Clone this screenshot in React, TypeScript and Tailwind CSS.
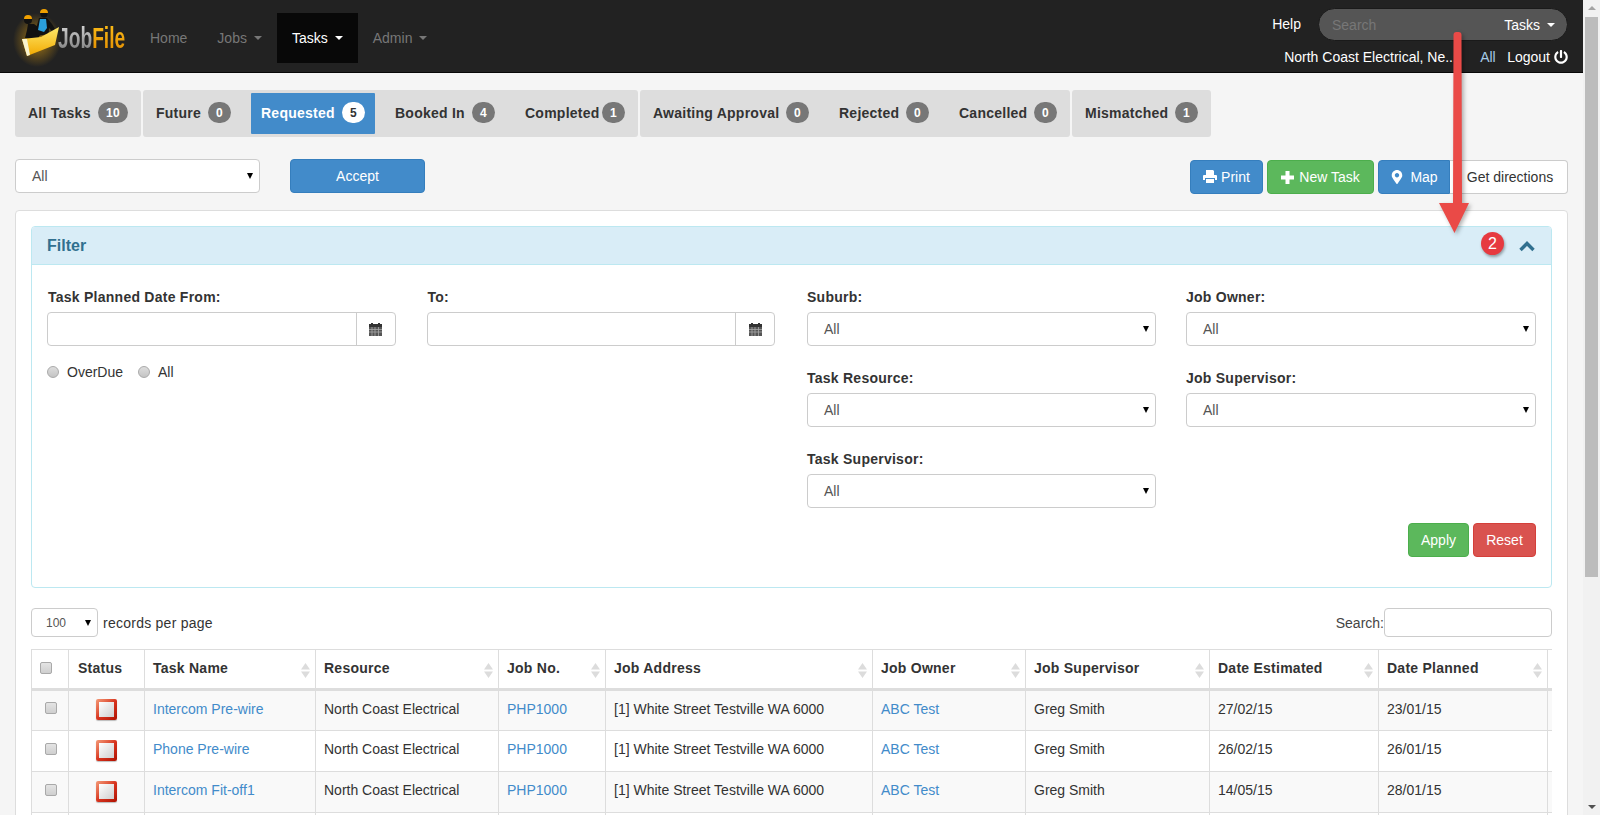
import { FaMapMarkerAlt, FaPowerOff } from 'react-icons/fa'

const Badge = ({ n, active = false }: { n: number; active?: boolean }) => (
  <span
    className={`flex h-[21px] items-center justify-center rounded-full text-xs font-bold ${n > 9 ? 'w-[30px]' : 'w-[23px]'} ${
      active ? 'bg-white text-[#333]' : 'bg-[#777] text-white'
    }`}
  >
    {n}
  </span>
)

const Pill = ({ label, n, w, active = false }: { label: string; n: number; w: string; active?: boolean }) => (
  <a
    className={`flex h-[41px] items-center justify-between rounded-[1px] px-[10px] pb-[2px] text-sm font-bold tracking-[0.25px] ${w} ${
      active ? 'bg-[#428bca] text-white' : 'text-[#333]'
    }`}
  >
    {label}
    <Badge n={n} active={active} />
  </a>
)

const NativeSelect = ({ value, className = '' }: { value: string; className?: string }) => (
  <div className={`relative flex items-center rounded border border-[#ccc] bg-white text-sm text-[#555] ${className}`}>
    <span>{value}</span>
    <span className="absolute right-[6px] top-1/2 -translate-y-1/2 border-x-[3.5px] border-t-[6px] border-x-transparent border-t-black" />
  </div>
)

const Field = ({ label, value }: { label: string; value: string }) => (
  <div>
    <label className="block h-[25px] text-sm leading-[20px] font-bold tracking-[0.25px] text-[#333]">{label}</label>
    <NativeSelect value={value} className="h-[34px] pl-[16px]" />
  </div>
)

const CalendarIcon = () => (
  <svg width="13" height="13" viewBox="0 0 13 13">
    <rect x="2" y="0" width="2" height="2" fill="#333" />
    <rect x="9" y="0" width="2" height="2" fill="#333" />
    <rect x="0" y="1" width="13" height="3" fill="#333" />
    <rect x="0" y="4" width="13" height="9" fill="#555" />
    <path d="M0 6.500h13M0 9h13M3 4v9M6 4v9M9.500 4v9" stroke="#a8a8a8" strokeWidth="0.8" />
  </svg>
)

const DateField = ({ label }: { label: string }) => (
  <div>
    <label className="block h-[25px] pl-[1px] text-sm leading-[20px] font-bold tracking-[0.25px] text-[#333]">{label}</label>
    <div className="flex h-[34px] rounded border border-[#ccc] bg-white">
      <div className="flex-1" />
      <div className="flex w-[39px] items-center justify-center border-l border-[#ccc]">
        <CalendarIcon />
      </div>
    </div>
  </div>
)

const Radio = ({ label }: { label: string }) => (
  <label className="flex items-center gap-[8px] text-sm text-[#333]">
    <span className="h-[12px] w-[12px] rounded-full border border-[#aaa] bg-gradient-to-b from-[#ddd] to-[#c4c4c4]" />
    {label}
  </label>
)

const Check = () => (
  <span className="block h-[12px] w-[12px] rounded-[2px] border border-[#a9a9a9] bg-gradient-to-b from-[#e4e4e4] to-[#cfcfcf]" />
)

const SortIcon = () => (
  <svg className="absolute right-[5px] top-[13px]" width="9" height="15" viewBox="0 0 9 15">
    <path d="M4.500 0 9 6.500H0z M4.500 15 0 8.500h9z" fill="#dcdcdc" />
  </svg>
)

const StatusIcon = () => (
  <span className="mx-auto block h-[21px] w-[21px] rounded-[2px] bg-gradient-to-br from-[#f39a78] via-[#d8341f] to-[#b00f00] p-[3px] shadow-[0_1px_1px_rgba(0,0,0,0.25)]">
    <span className="block h-full w-full bg-gradient-to-br from-white to-[#cfcfcf]" />
  </span>
)

const tabGroups = [
  [{ label: 'All Tasks', n: 10, w: 'w-[120px]' }],
  [
    { label: 'Future', n: 0, w: 'w-[95px]' },
    { label: 'Requested', n: 5, w: 'w-[124px]', active: true },
    { label: 'Booked In', n: 4, w: 'w-[120px]' },
    { label: 'Completed', n: 1, w: 'w-[120px]' },
  ],
  [
    { label: 'Awaiting Approval', n: 0, w: 'w-[176px]' },
    { label: 'Rejected', n: 0, w: 'w-[110px]' },
    { label: 'Cancelled', n: 0, w: 'w-[118px]' },
  ],
  [{ label: 'Mismatched', n: 1, w: 'w-[133px]' }],
]

const columns = [
  { label: 'Task Name', w: 'w-[171px]' },
  { label: 'Resource', w: 'w-[183px]' },
  { label: 'Job No.', w: 'w-[107px]' },
  { label: 'Job Address', w: 'w-[267px]' },
  { label: 'Job Owner', w: 'w-[153px]' },
  { label: 'Job Supervisor', w: 'w-[184px]' },
  { label: 'Date Estimated', w: 'w-[169px]' },
  { label: 'Date Planned', w: 'w-[169px]' },
]

const rows = [
  { task: 'Intercom Pre-wire', est: '27/02/15', planned: '23/01/15' },
  { task: 'Phone Pre-wire', est: '26/02/15', planned: '26/01/15' },
  { task: 'Intercom Fit-off1', est: '14/05/15', planned: '28/01/15' },
]

const Logo = () => (
  <div className="flex h-[65px] items-center">
    <svg width="50" height="65" viewBox="0 0 50 65" className="-ml-[5px] -mr-[2px] shrink-0">
      <defs>
        <radialGradient id="glow" cx="50%" cy="50%" r="50%">
          <stop offset="0%" stopColor="#d89a10" stopOpacity="0.75" />
          <stop offset="100%" stopColor="#d89a10" stopOpacity="0" />
        </radialGradient>
        <linearGradient id="folder" x1="0" y1="0" x2="0" y2="1">
          <stop offset="0%" stopColor="#ffe96a" />
          <stop offset="100%" stopColor="#f2a900" />
        </linearGradient>
      </defs>
      <ellipse cx="27" cy="34" rx="24" ry="27" fill="url(#glow)" />
      <path d="M18 18h6l7 5 7-1 1 4-9 3-3 6-12-3 2-8z" fill="#111" />
      <circle cx="18" cy="14" r="4" fill="#111" />
      <path d="M14 13a4 4 0 0 1 8 0z" fill="#f0a000" />
      <path d="M29 12h8l5 6 3 5-3 2-3-3-1 6-10 2-3-3z" fill="#111" />
      <path d="M30 13h6l1 9-3 4-6-2z" fill="#2a9fdc" />
      <circle cx="34" cy="8" r="3.500" fill="#111" />
      <path d="M30 7a4 4 0 0 1 8 0z" fill="#f0a000" />
      <path d="M12 33 L31 31 L49 21 L45 39 L17 50 Z" fill="url(#folder)" />
      <path d="M12 33 L17 50 L20 49 L17 33z" fill="#f9f4d0" />
    </svg>
    <span className="inline-block origin-left scale-x-[0.64] text-[30px] leading-none font-bold">
      <span className="bg-gradient-to-b from-[#e0e0e0] to-[#777] bg-clip-text text-transparent">Job</span>
      <span className="bg-gradient-to-b from-[#ffc21a] to-[#e08a00] bg-clip-text text-transparent">File</span>
    </span>
  </div>
)

const NavItem = ({ label, caret = true, active = false }: { label: string; caret?: boolean; active?: boolean }) => (
  <a className={`flex h-[50px] items-center gap-[7px] px-[15px] text-sm ${active ? 'bg-[#080808] text-white' : 'text-[#777]'}`}>
    {label}
    {caret && <span className={`border-x-[4px] border-t-[4px] border-x-transparent ${active ? 'border-t-white' : 'border-t-[#777]'}`} />}
  </a>
)

const Btn = ({ className, children }: { className: string; children: React.ReactNode }) => (
  <button className={`flex h-[34px] items-center justify-center rounded border text-sm text-white ${className}`}>{children}</button>
)

export default function App() {
  return (
    <div className="relative flex h-[815px] overflow-hidden bg-[#f5f5f5] font-['Liberation_Sans',Arial,sans-serif] text-sm text-[#333]">
      <div className="min-w-0 flex-1">
        {/* Navbar */}
        <header className="flex h-[73px] justify-between border-b border-[#080808] bg-[#222] px-[15px]">
          <div className="flex items-center pt-[4px]">
            <div className="w-[120px] shrink-0">
              <Logo />
            </div>
            <nav className="flex items-center">
              <NavItem label="Home" caret={false} />
              <NavItem label="Jobs" />
              <NavItem label="Tasks" active />
              <NavItem label="Admin" />
            </nav>
          </div>
          <div className="flex flex-col items-end pt-[8px]">
            <div className="flex items-center gap-[17px]">
              <span className="-mt-[1px] text-white">Help</span>
              <div className="flex h-[33px] w-[250px] items-center justify-between rounded-full border border-[#1a1a1a] bg-[#555] pl-[13px] pr-[12px]">
                <span className="text-[#777]">Search</span>
                <span className="flex items-center gap-[7px] text-white">
                  Tasks
                  <span className="border-x-[4px] border-t-[4px] border-x-transparent border-t-white" />
                </span>
              </div>
            </div>
            <div className="mt-[6px] flex h-[20px] items-center text-white">
              <span className="w-[196px]">North Coast Electrical, Ne...</span>
              <span className="w-[27px] text-[#a6cbe8]">All</span>
              <span>Logout</span>
              <FaPowerOff className="ml-[4px] h-[14px] w-[14px]" />
            </div>
          </div>
        </header>

        <main className="px-[15px]">
          {/* Status pills */}
          <div className="mt-[17px] flex gap-[2px]">
            {tabGroups.map((group, i) => (
              <div key={i} className="flex h-[47px] gap-[10px] rounded-[3px] bg-[#ddd] p-[3px]">
                {group.map((t) => (
                  <Pill key={t.label} {...t} />
                ))}
              </div>
            ))}
          </div>

          {/* Toolbar */}
          <div className="mt-[22px] flex h-[35px] items-start justify-between">
            <div className="flex gap-[30px]">
              <NativeSelect value="All" className="h-[34px] w-[245px] pl-[16px]" />
              <Btn className="w-[135px] border-[#357ebd] bg-[#428bca]">Accept</Btn>
            </div>
            <div className="flex pt-[1px]">
              <Btn className="w-[73px] gap-[4px] border-[#357ebd] bg-[#428bca]">
                <svg width="14" height="14" viewBox="0 0 14 14" fill="#fff">
                  <path d="M3 0h7l1 1v4H3z" />
                  <path d="M0 6a1 1 0 0 1 1-1h12a1 1 0 0 1 1 1v4h-2V8H2v2H0z" />
                  <path d="M3 9h8v4H3z" />
                </svg>
                Print
              </Btn>
              <Btn className="ml-[4px] w-[107px] gap-[5px] border-[#4cae4c] bg-[#5cb85c]">
                <svg width="13" height="13" viewBox="0 0 13 13" fill="#fff">
                  <path d="M4.500 0h4v4.500H13v4H8.500V13h-4V8.500H0v-4h4.500z" />
                </svg>
                New Task
              </Btn>
              <Btn className="ml-[4px] w-[72px] gap-[6px] rounded-r-none border-[#357ebd] bg-[#428bca]">
                <FaMapMarkerAlt className="h-[14px] w-[14px]" />
                Map
              </Btn>
              <Btn className="w-[118px] rounded-l-none border-[#ccc] border-l-0 bg-white pl-[3px] !text-[#333]">Get directions</Btn>
            </div>
          </div>

          {/* Main card */}
          <section className="mt-[16px] rounded border border-[#ddd] bg-white p-[15px]">
            <div className="rounded border border-[#bce8f1]">
              <div className="flex h-[38px] items-center justify-between rounded-t-[3px] border-b border-[#bce8f1] bg-[#d9edf7] pl-[15px] pr-[16px]">
                <h3 className="text-base font-bold text-[#31708f]">Filter</h3>
                <svg width="16" height="11" viewBox="0 0 16 11" className="mt-[2px]">
                  <path d="M1.500 9 8 2.500 14.500 9" fill="none" stroke="#31708f" strokeWidth="3.400" />
                </svg>
              </div>
              <div className="px-[15px] pb-[30px] pt-[22px]">
                <div className="grid grid-cols-4 gap-x-[31px]">
                  <div className="col-span-2 pr-[1px]">
                    <div className="grid grid-cols-2 gap-x-[31px]">
                      <DateField label="Task Planned Date From:" />
                      <DateField label="To:" />
                    </div>
                    <div className="mt-[16px] flex gap-[15px]">
                      <Radio label="OverDue" />
                      <Radio label="All" />
                    </div>
                  </div>
                  <div className="col-span-2 grid grid-cols-[349px_350px] justify-between gap-y-[22px]">
                    <Field label="Suburb:" value="All" />
                    <Field label="Job Owner:" value="All" />
                    <Field label="Task Resource:" value="All" />
                    <Field label="Job Supervisor:" value="All" />
                    <Field label="Task Supervisor:" value="All" />
                  </div>
                </div>
                <div className="mt-[15px] flex justify-end gap-[4px]">
                  <Btn className="w-[61px] border-[#4cae4c] bg-[#5cb85c]">Apply</Btn>
                  <Btn className="w-[63px] border-[#d43f3a] bg-[#d9534f]">Reset</Btn>
                </div>
              </div>
            </div>

            {/* Table controls */}
            <div className="mt-[20px] flex h-[29px] items-center justify-between">
              <div className="flex items-center gap-[5px]">
                <NativeSelect value="100" className="h-[29px] w-[67px] pl-[14px] !text-xs" />
                <span className="tracking-[0.25px]">records per page</span>
              </div>
              <div className="flex items-center">
                <span className="text-[#444]">Search:</span>
                <div className="h-[29px] w-[168px] rounded border border-[#ccc]" />
              </div>
            </div>

            {/* Tasks table */}
            <div className="mt-[12px] overflow-hidden">
              <table className="w-[1556px] table-fixed border-collapse border-l border-[#ddd]">
                <thead>
                  <tr className="h-[40px]">
                    <th className="w-[37px] border border-l-0 border-b-[3px] border-[#ddd] pb-[2px] pl-[8px]">
                      <Check />
                    </th>
                    <th className="w-[76px] border border-b-[3px] border-[#ddd] pb-[2px] pl-[9px] text-left tracking-[0.25px]">Status</th>
                    {columns.map((c) => (
                      <th key={c.label} className={`relative border border-b-[3px] border-[#ddd] pb-[2px] pl-[8px] text-left tracking-[0.25px] ${c.w}`}>
                        {c.label}
                        <SortIcon />
                      </th>
                    ))}
                    <th className="w-[40px] border border-r-0 border-b-[3px] border-[#ddd]" />
                  </tr>
                </thead>
                <tbody>
                  {rows.map((r, i) => (
                    <tr key={r.task} className={`h-[41px] ${i % 2 === 0 ? 'bg-[#f9f9f9]' : ''}`}>
                      <td className="border border-l-0 border-[#ddd] pb-[5px] pl-[13px]">
                        <Check />
                      </td>
                      <td className="border border-[#ddd] pb-[2px]">
                        <StatusIcon />
                      </td>
                      <td className="border border-[#ddd] pb-[4px] pl-[8px] text-[#428bca]">{r.task}</td>
                      <td className="border border-[#ddd] pb-[4px] pl-[8px]">North Coast Electrical</td>
                      <td className="border border-[#ddd] pb-[4px] pl-[8px] text-[#428bca]">PHP1000</td>
                      <td className="border border-[#ddd] pb-[4px] pl-[8px]">[1] White Street Testville WA 6000</td>
                      <td className="border border-[#ddd] pb-[4px] pl-[8px] text-[#428bca]">ABC Test</td>
                      <td className="border border-[#ddd] pb-[4px] pl-[8px]">Greg Smith</td>
                      <td className="border border-[#ddd] pb-[4px] pl-[8px]">{r.est}</td>
                      <td className="border border-[#ddd] pb-[4px] pl-[8px]">{r.planned}</td>
                      <td className="border border-r-0 border-[#ddd]" />
                    </tr>
                  ))}
                  {/* next row starts just above the fold */}
                  <tr className="h-[41px]">
                    <td className="border border-l-0 border-[#ddd]" />
                    <td className="border border-[#ddd]" />
                    {columns.map((c) => (
                      <td key={c.label} className="border border-[#ddd]" />
                    ))}
                    <td className="border border-r-0 border-[#ddd]" />
                  </tr>
                </tbody>
              </table>
            </div>
          </section>
        </main>
      </div>

      {/* Browser scrollbar */}
      <div className="flex w-[17px] shrink-0 flex-col items-center bg-[#f1f1f1]">
        <span className="mt-[6px] border-x-[4px] border-b-[4px] border-x-transparent border-b-[#a3a3a3]" />
        <div className="mx-[2px] mt-[7px] h-[560px] w-[13px] bg-[#bcbcbc]" />
        <span className="mb-[6px] mt-auto border-x-[4px] border-t-[4px] border-x-transparent border-t-[#505050]" />
      </div>

      {/* Annotation arrow */}
      <svg className="absolute left-[1430px] top-[25px] drop-shadow-[2px_2px_2px_rgba(0,0,0,0.3)]" width="50" height="215" viewBox="0 0 50 215">
        <path d="M23.500 10a3 3 0 0 1 3-3h2a3 3 0 0 1 3 3l.5 168H39L24.500 208 9 178h14z" fill="#ea4a47" />
      </svg>
      <span className="absolute left-[1481px] top-[232px] flex h-[23px] w-[23px] items-center justify-center rounded-full bg-[#e63a40] text-base text-white shadow-[1px_2px_3px_rgba(0,0,0,0.35)]">
        2
      </span>
    </div>
  )
}
